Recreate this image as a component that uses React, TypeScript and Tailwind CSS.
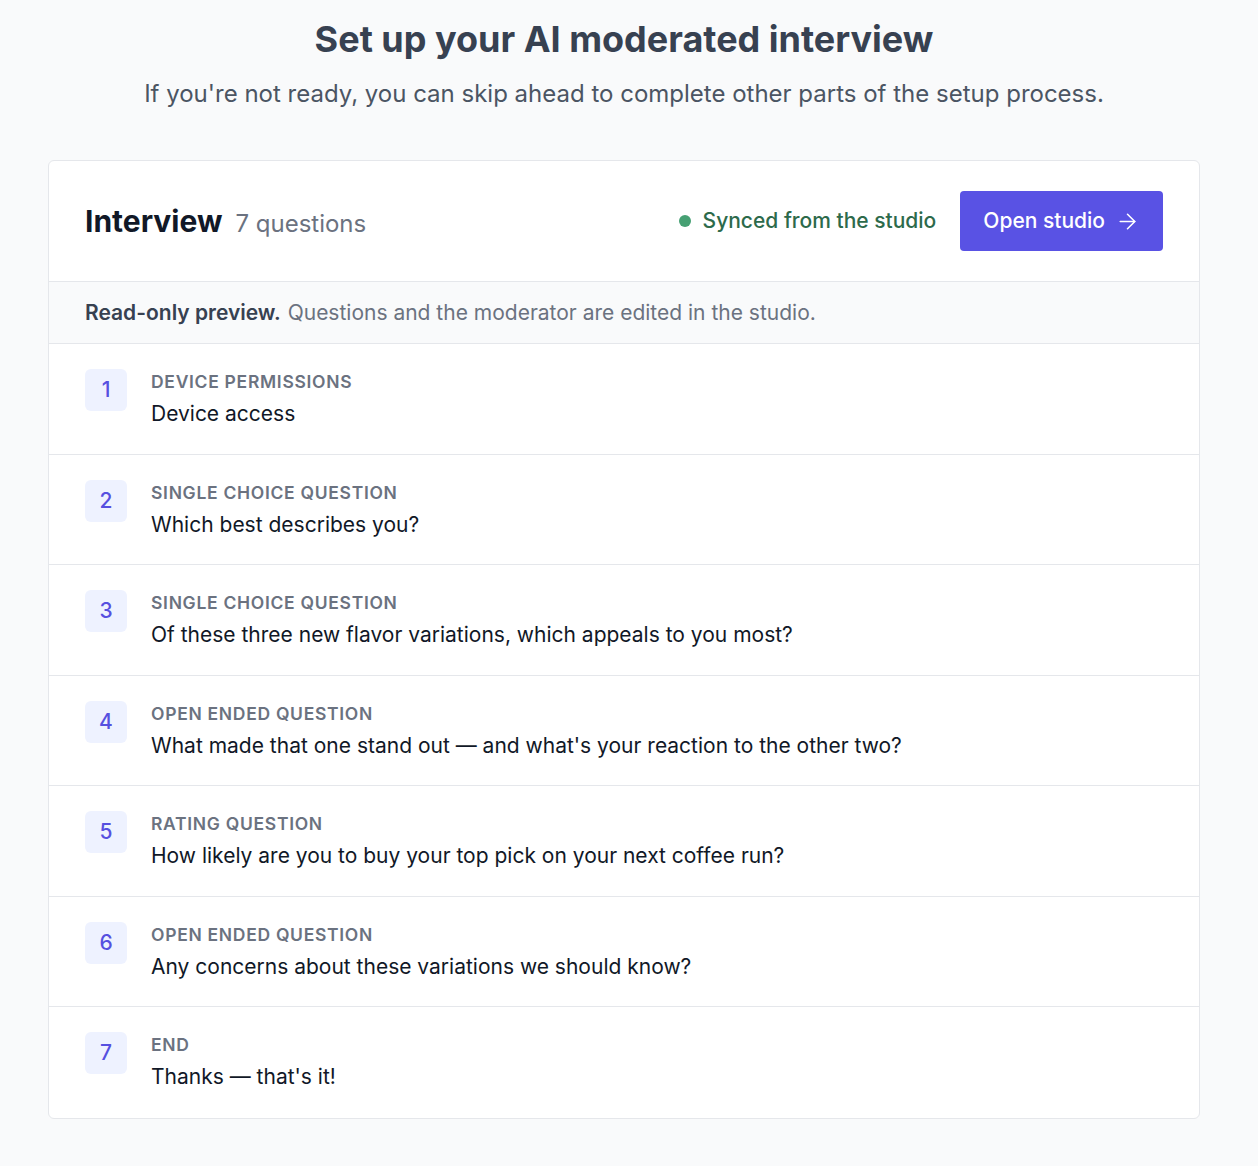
import { ArrowRight } from "lucide-react";

const questions = [
  { type: "Device permissions", text: "Device access" },
  { type: "Single choice question", text: "Which best describes you?" },
  {
    type: "Single choice question",
    text: "Of these three new flavor variations, which appeals to you most?",
  },
  {
    type: "Open ended question",
    text: "What made that one stand out — and what's your reaction to the other two?",
  },
  {
    type: "Rating question",
    text: "How likely are you to buy your top pick on your next coffee run?",
  },
  {
    type: "Open ended question",
    text: "Any concerns about these variations we should know?",
  },
  { type: "End", text: "Thanks — that's it!" },
];

export default function App() {
  return (
    <div className="min-h-[1166px] bg-[#f9fafb] pl-[48px] pr-[58px] pt-[16px] pb-[48px] font-['Inter',sans-serif]">
      {/* Heading */}
      <div className="text-center">
        <h1 className="text-[36px] leading-[46px] font-bold text-[#374151]">
          Set up your AI moderated interview
        </h1>
        <p className="mt-[16px] text-[24px] leading-[32px] text-[#4b5563]">
          If you're not ready, you can skip ahead to complete other parts of the setup process.
        </p>
      </div>

      {/* Card */}
      <div className="mt-[50px] bg-white border border-[#e5e7eb] rounded-[6px] overflow-hidden">
        <div className="flex items-center justify-between pl-[36px] pr-[36px] h-[121px] border-b border-[#e5e7eb]">
          <div className="flex items-baseline gap-[13px]">
            <h2 className="text-[30px] font-bold text-[#111827]">Interview</h2>
            <span className="text-[24px] text-[#6b7280]">7 questions</span>
          </div>
          <div className="flex items-center gap-[24px]">
            <div className="flex items-center gap-[12px]">
              <span className="w-[12px] h-[12px] rounded-full bg-[#46a073]" />
              <span className="text-[21px] font-medium text-[#2d6a4b]">Synced from the studio</span>
            </div>
            <button className="flex items-center gap-[10px] h-[60px] px-[23px] rounded-[4px] bg-[#5952e4] text-white text-[21px] font-medium">
              Open studio
              <ArrowRight className="w-[25px] h-[25px]" strokeWidth={1.5} />
            </button>
          </div>
        </div>

        <div className="bg-[#f9fafb] h-[62px] flex items-center pl-[36px] border-b border-[#e5e7eb] text-[21px]">
          <span className="font-semibold text-[#374151]">Read-only preview.</span>
          <span className="ml-[7px] text-[#6b7280]">
            Questions and the moderator are edited in the studio.
          </span>
        </div>

        {questions.map((q, i) => (
          <div
            key={i}
            className={`flex items-start gap-[24px] pl-[36px] pr-[36px] pt-[25px] pb-[25px] h-[110.5px] ${
              i < questions.length - 1 ? "border-b border-[#e5e7eb]" : ""
            }`}
          >
            <div className="w-[42px] h-[42px] shrink-0 rounded-[6px] bg-[#eef2ff] flex items-center justify-center text-[21px] font-medium text-[#5650e0]">
              {i + 1}
            </div>
            <div>
              <div className="text-[17.5px] leading-[26px] font-semibold uppercase tracking-[0.04em] text-[#6b7280]">
                {q.type}
              </div>
              <div className="mt-[4px] text-[21px] leading-[30px] text-[#111827]">{q.text}</div>
            </div>
          </div>
        ))}
      </div>
    </div>
  );
}
